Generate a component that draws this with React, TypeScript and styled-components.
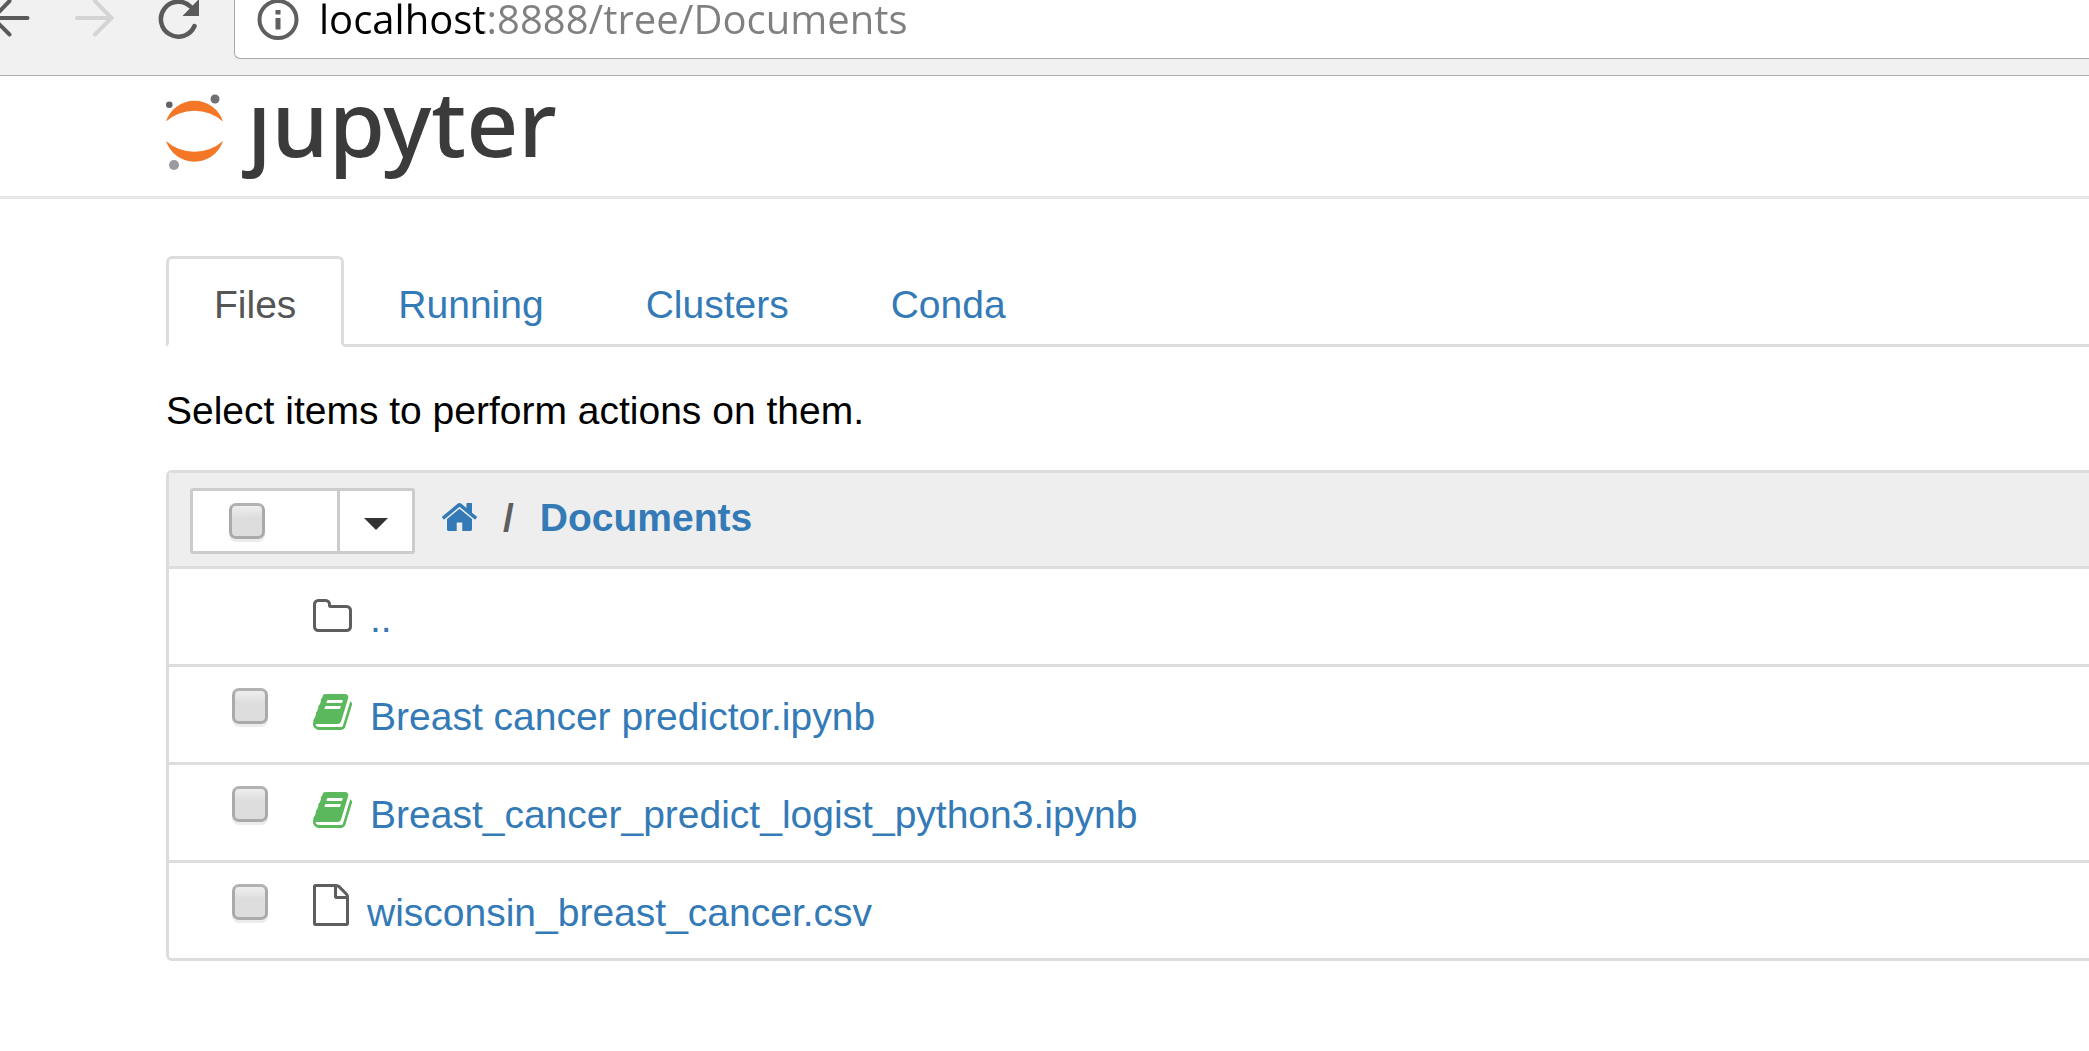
import React from "react";
import styled, { createGlobalStyle } from "styled-components";

const GlobalStyle = createGlobalStyle`
  * { box-sizing: border-box; }
  body {
    margin: 0;
    background: #fff;
    color: #000;
    font-family: "Liberation Sans", Arial, sans-serif;
    font-size: 39px;
    line-height: 56px;
    overflow-x: hidden;
  }
`;

const BrowserBar = styled.header`
  display: flex;
  align-items: flex-start;
  height: 76px;
  background: #f1f1f1;
  border-bottom: 1px solid #b0b0b0;
`;

const NavButtons = styled.nav`
  display: flex;
  gap: 44px;
  width: 234px;
  flex: none;
`;

const NavButton = styled.button`
  display: block;
  padding: 0;
  border: 0;
  background: none;
  line-height: 0;
  color: #5a5a5a;
  &:disabled { color: #d4d4d4; }
`;

const AddressBox = styled.div`
  flex: 1;
  display: flex;
  align-items: flex-start;
  gap: 20px;
  height: 59px;
  padding-left: 22px;
  background: #fff;
  border: 1px solid #a9a9a9;
  border-width: 0 0 1px 1px;
  border-radius: 0 0 0 6px;
`;

/* The host part of the address is drawn darker than the rest of it. */
const AddressInput = styled.input`
  flex: 1;
  min-width: 0;
  height: 36px;
  padding: 0;
  border: 0;
  outline: 0;
  font-family: "Open Sans", "Noto Sans", sans-serif;
  font-size: 40px;
  line-height: 36px;
  color: transparent;
  background: linear-gradient(90deg, #000 165px, #808080 165px);
  background-clip: text;
  -webkit-background-clip: text;
`;

const SiteHeader = styled.header`
  display: flex;
  align-items: flex-start;
  padding: 18px 0 26px 166px;
  border-bottom: 3px solid #e7e7e7;
`;

const Logo = styled.a`
  display: flex;
  align-items: flex-start;
  gap: 24px;
  color: #3b3b3c;
  text-decoration: none;
`;

const Wordmark = styled.span`
  font-family: "Noto Sans", "Open Sans", sans-serif;
  font-size: 91px;
  line-height: 56px;
  font-weight: 500;
`;

const Main = styled.main`
  padding: 57px 0 0 166px;
`;

const Tabs = styled.nav`
  display: flex;
  gap: 6px;
  border-bottom: 3px solid #ddd;
`;

const Tab = styled.a<{ $active?: boolean }>`
  padding: 18px 45px 11px;
  margin-bottom: -3px;
  border: 3px solid;
  border-color: ${(p) => (p.$active ? "#ddd #ddd #fff" : "transparent")};
  border-radius: 6px 6px 0 0;
  background: ${(p) => (p.$active ? "#fff" : "none")};
  color: ${(p) => (p.$active ? "#555" : "#337ab7")};
  text-decoration: none;
`;

const Hint = styled.p`
  margin: 36px 0 31px;
`;

const Listing = styled.section`
  border: 3px solid #ddd;
  border-right: 0;
  border-radius: 6px 0 0 6px;
`;

const Toolbar = styled.div`
  display: flex;
  align-items: flex-start;
  gap: 27px;
  padding: 15px 0 12px 21px;
  background: #eee;
`;

const SelectGroup = styled.div`
  display: flex;
  height: 66px;
  border: 3px solid #ccc;
  border-radius: 3px;
  background: #fff;
`;

const SelectAll = styled.label`
  display: flex;
  align-items: flex-start;
  width: 144px;
  padding: 12px 0 0 36px;
`;

const MenuButton = styled.button`
  display: flex;
  align-items: center;
  justify-content: center;
  width: 75px;
  padding: 6px 0 0;
  border: 0;
  border-left: 3px solid #ccc;
  background: #fff;
`;

const Caret = styled.span`
  border: 12px solid transparent;
  border-top-color: #333;
  border-bottom: 0;
`;

const Checkbox = styled.input.attrs({ type: "checkbox" })`
  appearance: none;
  flex: none;
  width: 36px;
  height: 36px;
  margin: 0;
  border: 3px solid #aaa;
  border-top-color: #b2b2b2;
  border-radius: 7px;
  background: linear-gradient(#eee, #ddd 40%, #ddd);
  box-shadow: 0 3px 0 #ececec;
`;

const Breadcrumb = styled.nav`
  display: flex;
  align-items: baseline;
  gap: 26px;
  line-height: 60px;
  font-weight: bold;
  color: #5e5e5e;
`;

const Link = styled.a`
  color: #337ab7;
  text-decoration: none;
`;

const FileList = styled.ul`
  margin: 0;
  padding: 0;
  list-style: none;
`;

const FileRow = styled.li`
  display: flex;
  align-items: flex-start;
  gap: 45px;
  height: 98px;
  padding: 21px 0 0 63px;
  border-top: 3px solid #ddd;
`;

const CheckSpace = styled.span`
  width: 36px;
`;

const Entry = styled.div`
  display: flex;
  align-items: baseline;
  gap: 18px;
  line-height: 57px;
`;

const Icon = styled.svg`
  flex: none;
  fill: currentColor;
`;

const FileIcon = styled(Icon)<{ $notebook?: boolean }>`
  color: ${(p) => (p.$notebook ? "#5cb85c" : "#5e5e5e")};
`;

const HOME =
  "M1472 992v480q0 26-19 45t-45 19h-384v-384h-256v384h-384q-26 0-45-19t-19-45v-480q0-1 .5-3t.5-3l575-474 575 474q1 2 1 6zm223-69l-62 74q-8 9-21 11h-3q-13 0-21-7l-692-577-692 577q-12 8-24 7-13-2-21-11l-62-74q-8-10-7-23.5t11-21.5l719-599q32-26 76-26t76 26l244 204v-195q0-14 9-23t23-9h192q14 0 23 9t9 23v408l219 182q10 8 11 21.5t-7 23.5z";

const ICONS = {
  folder: {
    w: 39,
    h: 33,
    box: "64 128 1664 1408",
    d: "M1600 1312v-704q0-40-28-68t-68-28h-704q-40 0-68-28t-28-68v-64q0-40-28-68t-68-28h-320q-40 0-68 28t-28 68v960q0 40 28 68t68 28h1216q40 0 68-28t28-68zm128-704v704q0 92-66 158t-158 66h-1216q-92 0-158-66t-66-158v-960q0-92 66-158t158-66h320q92 0 158 66t66 158v32h672q92 0 158 66t66 158z",
  },
  notebook: {
    w: 39,
    h: 36,
    box: "64 128 1664 1536",
    d: "M1703 478q40 57 18 129l-275 906q-19 64-76.5 107.5t-122.5 43.5h-923q-77 0-148.5-53.5t-99.5-131.5q-24-67-2-127 0-4 3-27t4-37q1-8-3-21.5t-3-19.5q2-11 8-21t16.5-23.5 16.5-23.5q23-38 45-91.5t30-91.5q3-10 .5-30t-.5-28q3-11 17-28t17-23q21-36 42-92t25-90q1-9-2.5-32t.5-28q4-13 22-30.5t22-22.5q19-26 42.5-84.5t27.5-96.5q1-8-3-25.5t-2-26.5q2-8 9-18t18-23 17-21q8-12 16.5-30.5t15-35 16-36 19.5-32 26.5-23.5 36-11.5 47.5 5.5l-1 3q38-9 51-9h761q74 0 114 56t18 130l-274 906q-36 119-71.5 153.5t-128.5 34.5h-869q-27 0-38 15-11 16-1 43 24 70 144 70h923q29 0 56-15.5t35-41.5l300-987q7-22 5-57 38 15 59 43zm-1064 2q-4 13 2 22.5t20 9.5h608q13 0 25.5-9.5t16.5-22.5l21-64q4-13-2-22.5t-20-9.5h-608q-13 0-25.5 9.5t-16.5 22.5l-21 64zm-83 256q-4 13 2 22.5t20 9.5h608q13 0 25.5-9.5t16.5-22.5l21-64q4-13-2-22.5t-20-9.5h-608q-13 0-25.5 9.5t-16.5 22.5l-21 64z",
  },
  file: {
    w: 36,
    h: 42,
    box: "128 0 1536 1792",
    d: "M1596 380q28 28 48 76t20 88v1152q0 40-28 68t-68 28h-1344q-40 0-68-28t-28-68v-1600q0-40 28-68t68-28h896q40 0 88 20t76 48zm-444-244v376h376q-10-29-22-41l-313-313q-12-12-41-22zm384 1528v-1024h-416q-40 0-68-28t-28-68v-416h-768v1536h1280z",
  },
};

type Item = { name: string; kind: keyof typeof ICONS; selectable: boolean };

const ITEMS: Item[] = [
  { name: "..", kind: "folder", selectable: false },
  { name: "Breast cancer predictor.ipynb", kind: "notebook", selectable: true },
  { name: "Breast_cancer_predict_logist_python3.ipynb", kind: "notebook", selectable: true },
  { name: "wisconsin_breast_cancer.csv", kind: "file", selectable: true },
];

const TABS = ["Files", "Running", "Clusters", "Conda"];

function BrowserChrome() {
  return (
    <BrowserBar>
      <NavButtons aria-label="Browser">
        <NavButton aria-label="Back">
          <svg width="30" height="40" viewBox="0 0 30 40" fill="none" stroke="currentColor" strokeWidth="4" strokeLinecap="round">
            <path d="M27.500 18H-7M9.500 1L-7 18L9.500 34.500" />
          </svg>
        </NavButton>
        <NavButton aria-label="Forward" disabled>
          <svg width="40" height="40" viewBox="0 0 40 40" fill="none" stroke="currentColor" strokeWidth="4" strokeLinecap="round">
            <path d="M3 18H37M21 1L37.500 18L21 34.500" />
          </svg>
        </NavButton>
        <NavButton aria-label="Reload">
          <svg width="44" height="40" viewBox="0 0 44 40">
            <path d="M36.500 26A17.500 17.500 0 1 1 33 7" fill="none" stroke="currentColor" strokeWidth="4.500" strokeLinecap="round" />
            <path d="M41 -1V16H24.500Z" fill="currentColor" />
          </svg>
        </NavButton>
      </NavButtons>
      <AddressBox>
        <svg width="42" height="42" viewBox="0 0 42 42" aria-hidden="true">
          <circle cx="21" cy="19.500" r="18.500" fill="none" stroke="#5f5f5f" strokeWidth="4" />
          <path d="M18.500 10h5v4.500h-5zM18.500 18h5v11.500h-5z" fill="#5f5f5f" />
        </svg>
        <AddressInput aria-label="Address" spellCheck={false} defaultValue="localhost:8888/tree/Documents" />
      </AddressBox>
    </BrowserBar>
  );
}

function JupyterLogo() {
  return (
    <Logo href="#" aria-label="jupyter">
      <svg width="57" height="76" viewBox="0 0 57 76" aria-hidden="true">
        <path d="M0 27.500A30 30 0 0 1 57 27.500A43 43 0 0 0 0 27.500Z" fill="#f37726" />
        <path d="M0 47A30 30 0 0 0 57 47A43 43 0 0 1 0 47Z" fill="#f37726" />
        <circle cx="3.300" cy="10.700" r="3.300" fill="#616262" />
        <circle cx="49" cy="5" r="4.500" fill="#6f7074" />
        <circle cx="8" cy="71" r="5" fill="#9a9b9e" />
      </svg>
      <Wordmark>ȷupyter</Wordmark>
    </Logo>
  );
}

function FileEntry({ name, kind, selectable }: Item) {
  const icon = ICONS[kind];
  return (
    <FileRow>
      {selectable ? <Checkbox aria-label={`Select ${name}`} /> : <CheckSpace />}
      <Entry>
        <FileIcon $notebook={kind === "notebook"} width={icon.w} height={icon.h} viewBox={icon.box} aria-hidden="true">
          <path d={icon.d} />
        </FileIcon>
        <Link href="#">{name}</Link>
      </Entry>
    </FileRow>
  );
}

export default function App() {
  return (
    <>
      <GlobalStyle />
      <BrowserChrome />
      <SiteHeader>
        <JupyterLogo />
      </SiteHeader>
      <Main>
        <Tabs aria-label="Sections">
          {TABS.map((tab, i) => (
            <Tab key={tab} href="#" $active={i === 0}>
              {tab}
            </Tab>
          ))}
        </Tabs>
        <Hint>Select items to perform actions on them.</Hint>
        <Listing>
          <Toolbar>
            <SelectGroup>
              <SelectAll>
                <Checkbox aria-label="Select all" />
              </SelectAll>
              <MenuButton aria-label="Selection menu">
                <Caret />
              </MenuButton>
            </SelectGroup>
            <Breadcrumb aria-label="Path">
              <Link href="#" aria-label="Home">
                <Icon width="35" height="28" viewBox="89 256 1614 1280" aria-hidden="true">
                  <path d={HOME} />
                </Icon>
              </Link>
              <span>/</span>
              <Link href="#">Documents</Link>
            </Breadcrumb>
          </Toolbar>
          <FileList>
            {ITEMS.map((item) => (
              <FileEntry key={item.name} {...item} />
            ))}
          </FileList>
        </Listing>
      </Main>
    </>
  );
}
